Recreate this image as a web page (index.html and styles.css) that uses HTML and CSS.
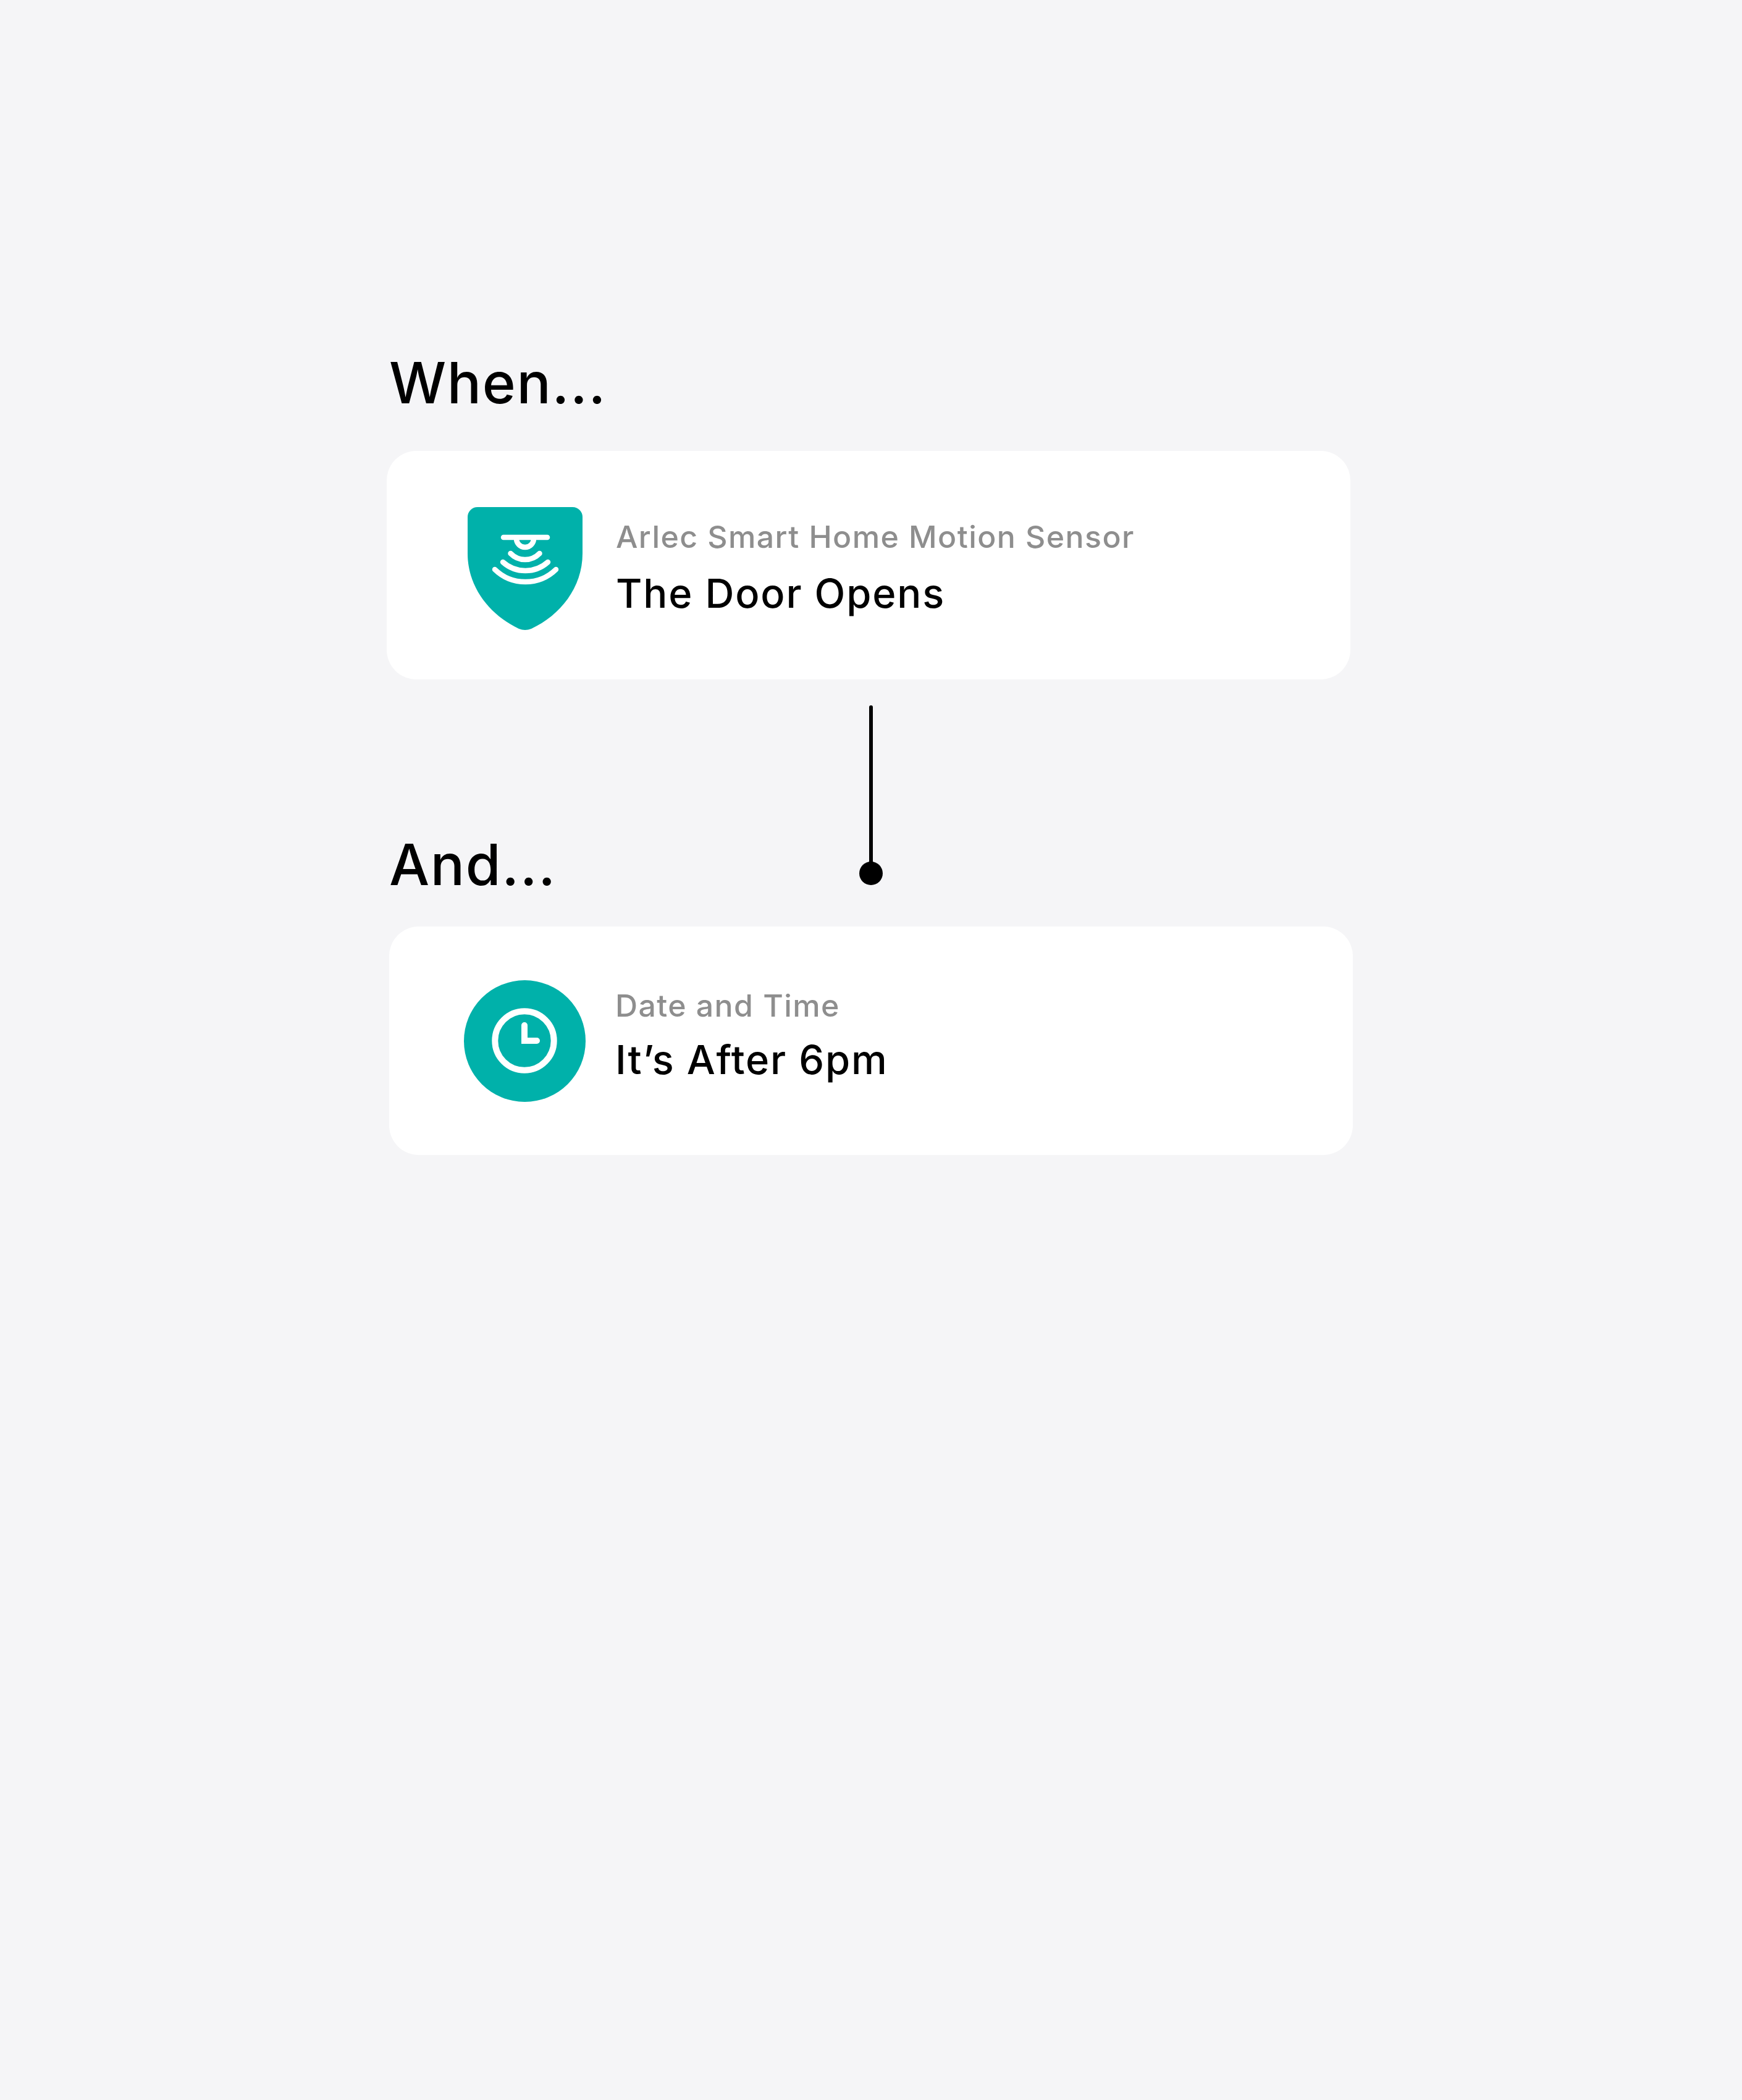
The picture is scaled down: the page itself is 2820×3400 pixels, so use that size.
FILE: index.html
```html
<!DOCTYPE html>
<html lang="en">
<head>
    <meta charset="UTF-8">
    <title>When And</title>
    <link rel="stylesheet" href="styles.css">
</head>
<body>
    <div class="page">
        <!-- WHEN -->
        <div class="section">
            <div class="heading">When...</div>
            <div class="card">
                <svg class="icon-shield" width="186" height="199" viewBox="0 0 186 199">
                    <path fill="#00b1aa" d="M16 0H170A16 16 0 0 1 186 16V75C186 130 150 175 103 197Q93 201 83 197C36 175 0 130 0 75V16A16 16 0 0 1 16 0Z"/>
                    <g fill="none" stroke="#fff" stroke-width="8.5" stroke-linecap="round">
                        <path d="M58 49H129"/>
                        <path stroke-linecap="butt" d="M79 51A14 14 0 0 0 107 51"/>
                        <path d="M69.5 75A32.6 32.6 0 0 0 116.5 75"/>
                        <path d="M57 89A54.6 54.6 0 0 0 130 89"/>
                        <path d="M44 101A71 71 0 0 0 143 101"/>
                    </g>
                </svg>
                <div class="card-text">
                    <div class="label">Arlec Smart Home Motion Sensor</div>
                    <div class="title">The Door Opens</div>
                </div>
            </div>
        </div>

        <!-- AND -->
        <div class="section section-and">
            <div class="heading">And...</div>
            <div class="card card-and">
                <svg class="icon-clock" width="197" height="197" viewBox="0 0 197 197">
                    <circle cx="98.5" cy="98.5" r="98.5" fill="#00b1aa"/>
                    <circle cx="98" cy="98" r="47.7" fill="none" stroke="#fff" stroke-width="10"/>
                    <path d="M98 73V98H118" fill="none" stroke="#fff" stroke-width="10" stroke-linecap="round"/>
                </svg>
                <div class="card-text">
                    <div class="label">Date and Time</div>
                    <div class="title">It’s After 6pm</div>
                </div>
            </div>
        </div>

        <!-- CONNECTOR -->
        <div class="connector"><span class="connector-dot"></span></div>
    </div>
</body>
</html>
```

FILE: styles.css
```css
body {
    margin: 0;
    font-family: Inter, "Liberation Sans", sans-serif;
    background: #f5f5f7;
    color: #000;
}
.page {
    position: relative;
    box-sizing: border-box;
    height: 3400px;
    padding: 564px 0 0 626px;
}
.heading {
    height: 112px;
    line-height: 112px;
    margin: 0 0 54px 4px;
    font-size: 92px;
    font-weight: 450;
    letter-spacing: 1.6px;
}
.section-and {
    margin-top: 244px;
}
.section-and .heading {
    margin-bottom: 44px;
}
.card {
    display: flex;
    align-items: center;
    box-sizing: border-box;
    width: 1560px;
    height: 370px;
    padding-left: 131px;
    background: #fff;
    border-radius: 48px;
}
.card-and {
    margin-left: 4px;
    padding-left: 121px;
}
.icon-shield {
    margin: 11px 54px 0 0;
}
.icon-clock {
    margin-right: 48px;
}
.card-text {
    display: flex;
    flex-direction: column;
    gap: 24px;
    margin-top: 8px;
}
.card-and .card-text {
    gap: 20px;
    margin-top: 0;
    margin-bottom: 18px;
}
.label {
    font-size: 50px;
    font-weight: 450;
    line-height: 60px;
    letter-spacing: 1.42px;
    color: #8e8e8e;
}
.title {
    font-size: 65px;
    font-weight: 450;
    line-height: 76px;
    letter-spacing: 1.85px;
}
.connector {
    position: absolute;
    left: 1407px;
    top: 1142px;
    width: 6px;
    height: 260px;
    background: #000;
    border-radius: 3px;
}
.connector-dot {
    position: absolute;
    left: -16px;
    top: 253px;
    width: 38px;
    height: 38px;
    background: #000;
    border-radius: 50%;
}
```
